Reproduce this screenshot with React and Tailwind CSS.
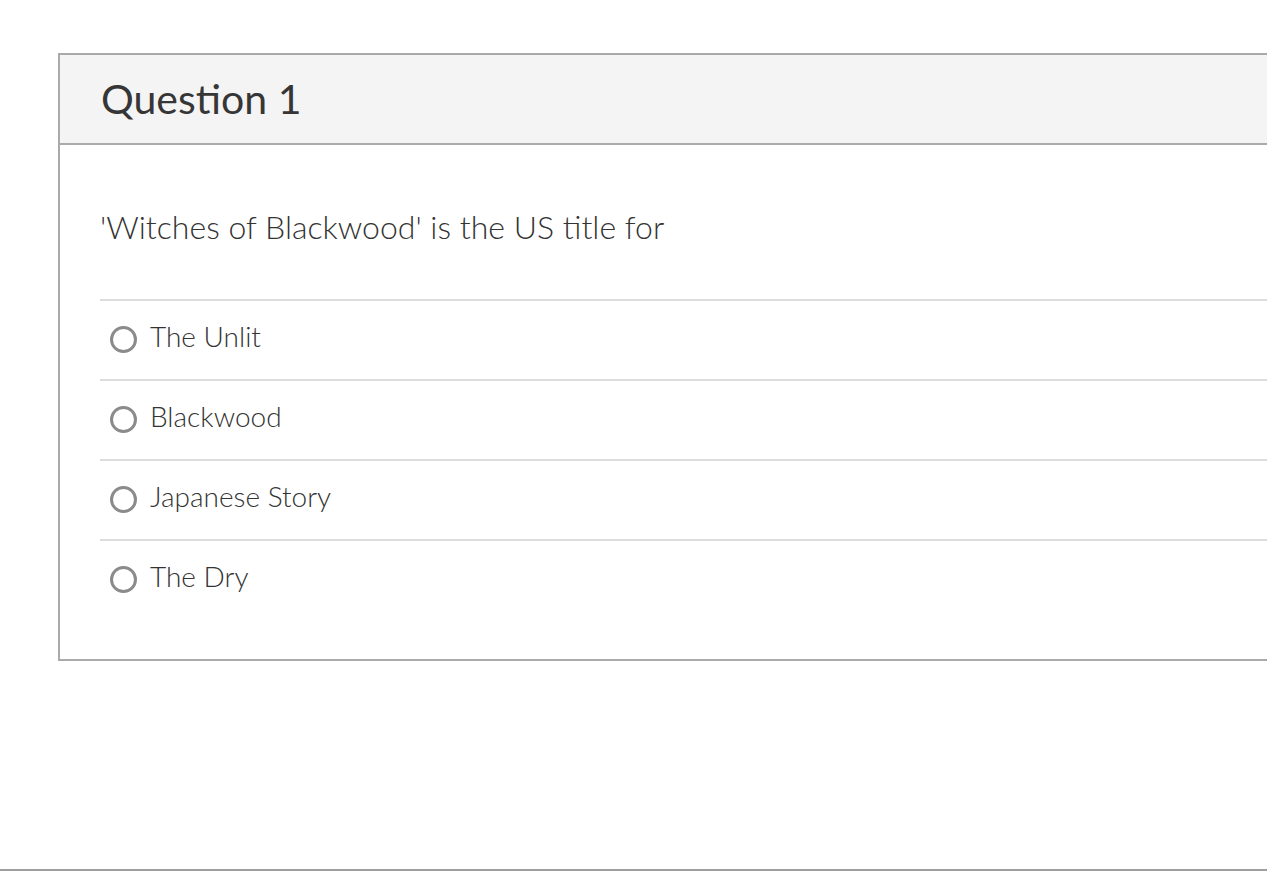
const answers = ["The Unlit", "Blackwood", "Japanese Story", "The Dry"];

const Radio = () => (
    <span className="shrink-0 w-[27px] h-[27px] rounded-full border-[3px] border-[#8b8b8b] bg-white" />
);

export default function App() {
    return (
        <div className="w-[1267px] h-[880px] overflow-hidden bg-white font-['Lato','Open_Sans',sans-serif] text-[#333]">
            <div className="h-[871px] border-b-2 border-[#9e9e9e] pt-[53px] pl-[58px]">
                <div className="w-[1260px] border-2 border-r-0 border-[#aaaaaa]">
                    <div className="h-[90px] bg-[#f4f4f4] border-b-2 border-[#aaaaaa] pl-[41px] flex items-center">
                        <h2 className="text-[41px] font-normal text-[#363636] leading-none pb-[2px]">Question 1</h2>
                    </div>
                    <div className="pl-[40px] pt-[64px] pb-[40px]">
                        <p className="text-[32px] font-light leading-[40px] text-[#333] mb-[52px] -mt-[2px]">
                            'Witches of Blackwood' is the US title for
                        </p>
                        {answers.map((answer) => (
                            <label
                                key={answer}
                                className="h-[80px] border-t-2 border-[#dddddd] flex items-center gap-[13px] pl-[10px] pb-[2px]"
                            >
                                <Radio />
                                <span className="text-[28px] font-light text-[#333] -mt-[6px]">{answer}</span>
                            </label>
                        ))}
                    </div>
                </div>
            </div>
        </div>
    );
}
